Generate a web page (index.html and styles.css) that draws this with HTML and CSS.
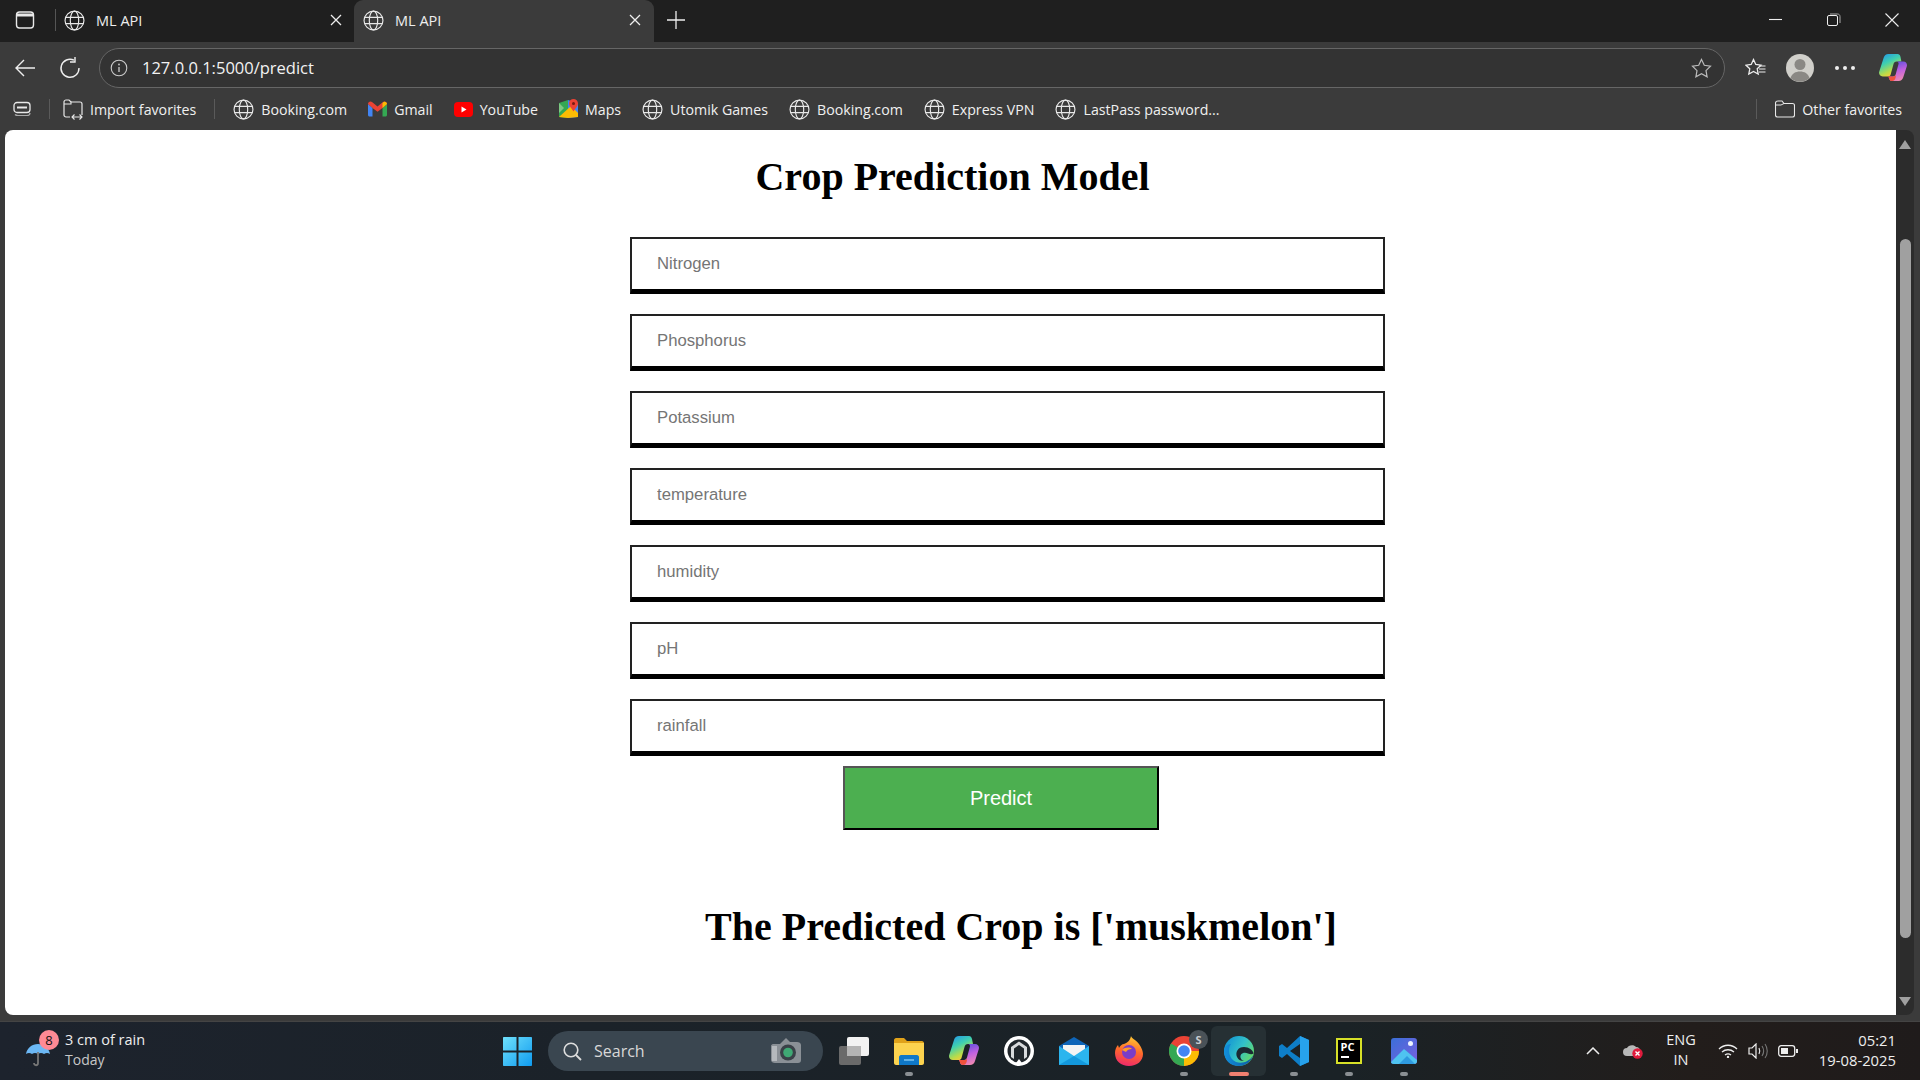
FILE: index.html
```html
<!DOCTYPE html>
<html>
<head>
    <title>ML API</title>
    <link rel="stylesheet" href="styles.css">
</head>
<body>
    <svg class="defs" width="0" height="0">
        <symbol id="globe" viewBox="0 0 20 20">
            <g fill="none" stroke="#e8e8e8" stroke-width="1.1">
                <circle cx="10" cy="10" r="9"/>
                <ellipse cx="10" cy="10" rx="4" ry="9"/>
                <path d="M1.6 7h16.8M1.6 13h16.8"/>
            </g>
        </symbol>
        <symbol id="copilot" viewBox="0 0 30 30">
            <defs>
                <linearGradient id="copA" x1="0" y1="0" x2="0.5" y2="1">
                    <stop offset="0" stop-color="#1f8ff0"/>
                    <stop offset="0.45" stop-color="#3fd0b0"/>
                    <stop offset="0.8" stop-color="#b8dc4a"/>
                    <stop offset="1" stop-color="#f8c93a"/>
                </linearGradient>
                <linearGradient id="copB" x1="0.3" y1="0" x2="0.6" y2="1">
                    <stop offset="0" stop-color="#5a50e0"/>
                    <stop offset="0.5" stop-color="#c060e0"/>
                    <stop offset="1" stop-color="#f08ab0"/>
                </linearGradient>
            </defs>
            <path d="M10 0h10c1.500 0 2.500 1 3 3l1 5h-5c-2 0-3 1-3.500 3l-3 11c-.5 1.500-1.500 2-3 2H4c-3 0-4.500-2.500-3.800-5L5 4c.7-2.500 2.500-4 5-4z" fill="url(#copA)"/>
            <path d="M19 8h7c3 0 4.500 2.500 3.800 5L26 25c-.7 2.500-2.500 4-5 4h-7c-1.500 0-3-1-3-3l-1-2h5c1.500 0 2.500-1 3-2.500l3-11C21 9 20.500 8 19 8z" fill="url(#copB)"/>
            <path d="M10 24h5.500c1 0 2-.5 2.500-1.500 0 0 .5 6.500-4 6.500-1.800 0-2.600-1-3-2.500z" fill="#f0523c"/>
        </symbol>
    </svg>

    <div class="tabstrip">
        <svg class="sidebar-btn" width="20" height="18" viewBox="0 0 20 18"><rect x="1.500" y="1" width="17" height="16" rx="3" fill="none" stroke="#e8e8e8" stroke-width="1.400"/><path d="M2 2.500h16v3H2z" fill="#e8e8e8"/></svg>
        <div class="tab-sep"></div>
        <div class="tab">
            <svg width="21" height="21"><use href="#globe"/></svg>
            <span class="tab-title">ML API</span>
            <svg class="tab-close" width="14" height="14" viewBox="0 0 14 14"><path d="M2 2l10 10M12 2L2 12" stroke="#eee" stroke-width="1.300"/></svg>
        </div>
        <div class="tab active">
            <svg width="21" height="21"><use href="#globe"/></svg>
            <span class="tab-title">ML API</span>
            <svg class="tab-close" width="14" height="14" viewBox="0 0 14 14"><path d="M2 2l10 10M12 2L2 12" stroke="#eee" stroke-width="1.300"/></svg>
        </div>
        <svg class="new-tab" width="18" height="18" viewBox="0 0 18 18"><path d="M9 0v18M0 9h18" stroke="#eee" stroke-width="1.300"/></svg>
        <div class="window-btns">
            <svg width="14" height="14" viewBox="0 0 14 14"><path d="M0 6.500h13" stroke="#eee" stroke-width="1.100"/></svg>
            <svg width="14" height="14" viewBox="0 0 14 14"><rect x="0.500" y="2.500" width="10" height="10" rx="1.500" fill="none" stroke="#eee"/><path d="M3 1h7.500C12 1 13 2 13 3.500V10" fill="none" stroke="#aaa"/></svg>
            <svg width="14" height="14" viewBox="0 0 14 14"><path d="M0.500 0.500l13 13M13.500 0.500l-13 13" stroke="#eee" stroke-width="1.100"/></svg>
        </div>
    </div>

    <div class="toolbar">
        <svg class="tool-back" width="22" height="20" viewBox="0 0 22 20"><path d="M21 10H2M10 2l-8 8 8 8" fill="none" stroke="#eee" stroke-width="1.400"/></svg>
        <svg class="tool-reload" width="22" height="22" viewBox="0 0 22 22"><path d="M15 3.200A9 9 0 1 0 20 11" fill="none" stroke="#eee" stroke-width="1.400"/><path d="M16 0v5h-5" fill="none" stroke="#eee" stroke-width="1.400"/></svg>
        <div class="address">
            <svg width="18" height="18" viewBox="0 0 18 18"><circle cx="9" cy="9" r="7.800" fill="none" stroke="#ccc" stroke-width="1.100"/><path d="M9 8v5" stroke="#ccc" stroke-width="1.300"/><circle cx="9" cy="5.500" r="0.900" fill="#ccc"/></svg>
            <span class="url">127.0.0.1:5000/predict</span>
            <svg class="addr-star" width="21" height="20" viewBox="0 0 21 20"><path d="M10.500 1.500l2.800 5.800 6.200.9-4.500 4.400 1.100 6.200-5.600-3-5.600 3 1.100-6.200L1.500 8.200l6.200-.9z" fill="none" stroke="#bbb" stroke-width="1.200"/></svg>
        </div>
        <svg class="fav-btn" width="21" height="20" viewBox="0 0 21 20"><path d="M8.500 1.500l2.300 5 5.200.7-3.800 3.600 1 5.200-4.700-2.600-4.700 2.600 1-5.200L1 7.200l5.200-.7z" fill="none" stroke="#eee" stroke-width="1.300"/><path d="M14 8h6.500M14 11h6.500M14 14h6.500" stroke="#eee" stroke-width="1.100"/></svg>
        <svg class="profile" width="28" height="28" viewBox="0 0 28 28"><circle cx="14" cy="14" r="14" fill="#d0cfca"/><circle cx="14" cy="10.500" r="5.500" fill="#8a8884"/><path d="M4.500 24c1.500-4.500 5-6.500 9.500-6.500s8 2 9.500 6.500a14 14 0 0 1-19 0z" fill="#8a8884"/></svg>
        <div class="dots"><i></i><i></i><i></i></div>
        <svg class="tool-copilot" width="28" height="28"><use href="#copilot"/></svg>
    </div>

    <div class="bookmarks">
        <svg class="bm-collections" width="20" height="16" viewBox="0 0 20 16"><rect x="1" y="1.500" width="16" height="10" rx="3" fill="none" stroke="#e8e8e8" stroke-width="1.300"/><path d="M4 5.500h10v2H4z" fill="#e8e8e8"/><path d="M2 13.500c1 1 2 1 3 1h9c1.500 0 3-1 3-2.500" fill="none" stroke="#aaa" stroke-width="1.200"/></svg>
        <div class="bm-sep"></div>
        <div class="bm bm-import">
            <svg width="21" height="21" viewBox="0 0 21 21"><path d="M7 18H3c-1 0-2-1-2-2V3c0-1 1-2 2-2h3l2 2h9c1 0 2 1 2 2v11" fill="none" stroke="#e8e8e8" stroke-width="1.200"/><path d="M1 5h7V2.500" fill="none" stroke="#e8e8e8" stroke-width="1.100"/><path d="M9 18h10M11.500 15.500L9 18l2.500 2.500M16.500 15.500L19 18l-2.500 2.500" fill="none" stroke="#e8e8e8" stroke-width="1.100"/></svg>
            <span>Import favorites</span>
        </div>
        <div class="bm-sep bm-sep2"></div>
        <div class="bm bm-first"><svg width="21" height="21"><use href="#globe"/></svg><span>Booking.com</span></div>
        <div class="bm">
            <svg width="19" height="16" viewBox="0 0 19 16"><path d="M0 3v11c0 .8.600 1.500 1.500 1.500H4.500V7z" fill="#4285f4"/><path d="M14.500 7v8.500h3c.9 0 1.500-.7 1.500-1.500V3z" fill="#34a853"/><path d="M0 3c0-2 2.500-3.500 4-2l5.500 4.500L15 1c1.500-1.500 4 0 4 2l-4.500 4-5 3.800L4.500 7z" fill="#ea4335"/><path d="M14.500 2v5L19 3c0-2-2.500-3.500-4.500-1z" fill="#fbbc04"/></svg>
            <span>Gmail</span>
        </div>
        <div class="bm">
            <svg width="19" height="15" viewBox="0 0 19 15"><rect width="19" height="15" rx="4" fill="#f00"/><path d="M7.500 4.500v6l5-3z" fill="#fff"/></svg>
            <span>YouTube</span>
        </div>
        <div class="bm">
            <svg width="19" height="20" viewBox="0 0 19 20"><path d="M0 4l9-3v18l-9-1z" fill="#34a853"/><path d="M9 1l10 3v14l-10 1z" fill="#4285f4"/><path d="M0 18L12 7l7 7v4l-10 1z" fill="#fbbc04"/><path d="M0 4l5 5-5 5z" fill="#7ec883"/><path d="M14.500 0a4.500 4.500 0 0 1 4.500 4.500c0 3-3 5-4.500 8-1.500-3-4.500-5-4.500-8A4.500 4.500 0 0 1 14.500 0z" fill="#ea4335"/><circle cx="14.500" cy="4.500" r="1.500" fill="#7a1a12"/></svg>
            <span>Maps</span>
        </div>
        <div class="bm"><svg width="21" height="21"><use href="#globe"/></svg><span>Utomik Games</span></div>
        <div class="bm"><svg width="21" height="21"><use href="#globe"/></svg><span>Booking.com</span></div>
        <div class="bm"><svg width="21" height="21"><use href="#globe"/></svg><span>Express VPN</span></div>
        <div class="bm"><svg width="21" height="21"><use href="#globe"/></svg><span>LastPass password...</span></div>
        <div class="bm-sep bm-sep3"></div>
        <div class="bm bm-other">
            <svg width="20" height="18" viewBox="0 0 20 18"><path d="M3 1h4l2 2.500h8.500c1 0 2 1 2 2V15c0 1-1 2-2 2H2.500c-1 0-2-1-2-2V3C.5 2 1.500 1 3 1z" fill="none" stroke="#e8e8e8" stroke-width="1.100"/><path d="M.5 5H6l3-1.500" fill="none" stroke="#e8e8e8" stroke-width="1"/></svg>
            <span>Other favorites</span>
        </div>
    </div>

    <div class="content">
        <div class="page">
            <h1 class="title">Crop Prediction Model</h1>
            <form class="crop-form">
                <input type="text" placeholder="Nitrogen">
                <input type="text" placeholder="Phosphorus">
                <input type="text" placeholder="Potassium">
                <input type="text" placeholder="temperature">
                <input type="text" placeholder="humidity">
                <input type="text" placeholder="pH">
                <input type="text" placeholder="rainfall">
                <button type="button" class="predict">Predict</button>
            </form>
            <h1 class="result">The Predicted Crop is ['muskmelon']</h1>
        </div>
        <div class="scrollbar">
            <div class="arrow-up"></div>
            <div class="thumb"></div>
            <div class="arrow-down"></div>
        </div>
    </div>

    <div class="taskbar">
        <div class="weather">
            <div class="umbrella">
                <svg width="24" height="23" viewBox="0 0 24 23"><path d="M0 10C1 4 6 0 12 0s11 4 12 10c-2-1.500-4-1.500-6 0-2-1.500-4-1.500-6 0-2-1.500-4-1.500-6 0-2-1.500-4-1.500-6 0z" fill="#6cb8f5"/><path d="M12 8v11c0 3-4 3-4 0" fill="none" stroke="#777" stroke-width="1.800"/></svg>
                <span class="badge">8</span>
            </div>
            <div class="weather-text">
                <span class="w1">3 cm of rain</span>
                <span class="w2">Today</span>
            </div>
        </div>
        <div class="apps">
            <svg class="start" width="29" height="29" viewBox="0 0 29 29">
                <defs><linearGradient id="win" x1="0" y1="0" x2="1" y2="1"><stop offset="0" stop-color="#6fe0fb"/><stop offset="1" stop-color="#0f9bf0"/></linearGradient></defs>
                <path d="M1 0h12.500v13.500H0V1c0-.6.400-1 1-1zM15.500 0H28c.6 0 1 .4 1 1v12.500H15.500zM0 15.500h13.500V29H1c-.6 0-1-.4-1-1zM15.500 15.500H29V28c0 .6-.4 1-1 1H15.500z" fill="url(#win)"/>
            </svg>
            <div class="search">
                <svg width="19" height="19" viewBox="0 0 19 19"><circle cx="8" cy="8" r="6.800" fill="none" stroke="#ddd" stroke-width="1.600"/><path d="M13 13l5 5" stroke="#ddd" stroke-width="1.800"/></svg>
                <span>Search</span>
                <svg class="search-cam" width="30" height="26" viewBox="0 0 30 26"><path d="M2 6h7l2-2 4-4 4 4h7c2 0 4 1 4 3v15c0 2-1 3-3 3H4c-2 0-4-1-4-3V8c0-1 1-2 2-2z" fill="#8a9096"/><rect x="1" y="8" width="5" height="15" fill="#b5b9bd"/><circle cx="17" cy="14.500" r="8" fill="#3a4148"/><circle cx="17" cy="14.500" r="4.800" fill="#3fa874"/></svg>
            </div>
            <div class="app app-task">
                <svg width="30" height="28" viewBox="0 0 30 28"><rect x="0" y="9" width="22" height="19" rx="2" fill="#6a6a6a"/><rect x="8" y="0" width="22" height="19" rx="2" fill="#f2f2f2"/><rect x="8" y="9" width="14" height="10" fill="#b4b4b4"/></svg>
            </div>
            <div class="app app-files">
                <svg width="30" height="27" viewBox="0 0 30 27"><path d="M0 2c0-1 1-2 2-2h8l3 3h15c1 0 2 1 2 2v3H0z" fill="#e0a21a"/><path d="M0 5h30v20c0 1-1 2-2 2H2c-1 0-2-1-2-2z" fill="#fcd34f"/><path d="M5 27v-8c0-1 1-2 2-2h16c1 0 2 1 2 2v8z" fill="#0f78c8"/><path d="M10 22h10" stroke="#7cc4f0" stroke-width="1.500"/></svg>
                <i class="pip"></i>
            </div>
            <div class="app app-cop"><svg width="30" height="30"><use href="#copilot"/></svg></div>
            <div class="app app-wp">
                <svg width="30" height="30" viewBox="0 0 30 30"><circle cx="15" cy="15" r="15" fill="#fff"/><circle cx="15" cy="15" r="11.500" fill="#20262b"/><path d="M7 21V11l8-5.500L23 11v10l-3 2V12.500l-5-3.500-5 3.500V23z" fill="#d8dadc"/><path d="M12 27l3-4 3 4z" fill="#fff"/></svg>
            </div>
            <div class="app app-mail">
                <svg width="30" height="28" viewBox="0 0 30 28"><path d="M15 0l15 9v3H0V9z" fill="#0f65b8"/><path d="M4 8h22v7l-11 5-11-5z" fill="#f4f4f4"/><path d="M0 9l15 10L30 9v19H0z" fill="#2bb5ee"/><path d="M0 28l15-9 15 9z" fill="#1398dc"/></svg>
            </div>
            <div class="app app-fox">
                <svg width="28" height="30" viewBox="0 0 28 30">
                    <defs><linearGradient id="fox" x1="0.6" y1="0" x2="0.4" y2="1"><stop offset="0" stop-color="#ffc933"/><stop offset="0.5" stop-color="#ff6a2b"/><stop offset="1" stop-color="#ee2a6a"/></linearGradient></defs>
                    <path d="M16 0c1 3 4 3 8 8 3 4 4 8 4 10 0 7-6 12-14 12S0 25 0 17c0-3 1-6 3-8l1 3c1-2 3-4 5-4 3-1 6-3 7-8z" fill="url(#fox)"/>
                    <circle cx="14" cy="16" r="7" fill="#7a3dc8"/>
                    <path d="M7 14c3-3 8-3 10-1-3 0-5 1-6 3z" fill="#ff9a2b"/>
                </svg>
            </div>
            <div class="app app-chrome">
                <svg width="30" height="30" viewBox="0 0 30 30"><circle cx="15" cy="15" r="15" fill="#ea4335"/><path d="M15 15L2 7.500A15 15 0 0 0 15 30l6.500-11z" fill="#34a853"/><path d="M15 15h15A15 15 0 0 1 15 30z" fill="#fbbc04"/><circle cx="15" cy="15" r="7.500" fill="#fff"/><circle cx="15" cy="15" r="5.800" fill="#4285f4"/></svg>
                <span class="chrome-s">S</span>
                <i class="pip"></i>
            </div>
            <div class="app app-edge">
                <svg width="30" height="30" viewBox="0 0 30 30">
                    <defs>
                        <linearGradient id="edge" x1="0" y1="0" x2="1" y2="0.600"><stop offset="0" stop-color="#0c8bd6"/><stop offset="0.600" stop-color="#33c2c9"/><stop offset="1" stop-color="#62d96b"/></linearGradient>
                        <linearGradient id="edgeB" x1="0" y1="0" x2="1" y2="0"><stop offset="0" stop-color="#1290dc"/><stop offset="1" stop-color="#0c59a4"/></linearGradient>
                    </defs>
                    <circle cx="15" cy="15" r="15" fill="url(#edge)"/>
                    <path d="M29.500 19c-3 7-8 11-14.500 11C6 30 0 24 0 15 0 11 3 8 7 8c-4 5-2 15 5 18 6 2 13 0 17.500-7z" fill="url(#edgeB)"/>
                    <path d="M29.500 17.500C29 14 25 11 20 11c-6 0-9 5-7 10 1.500 3 4 4 7 4-3-1-4.500-4-3-6.500 1.500-2 5-2 7-1 2 .8 4 1.200 5.500 0z" fill="#1b2a33"/>
                </svg>
                <i class="pip pip-on"></i>
            </div>
            <div class="app app-code">
                <svg width="30" height="30" viewBox="0 0 30 30"><path d="M21 0l9 4v22l-9 4L8 18l-5 4-3-2v-10l3-2 5 4z" fill="#0e7ec8"/><path d="M21 0l9 4v22l-9 4z" fill="#27a2ec"/><path d="M21 8L11 15l10 7z" fill="#1b2226"/></svg>
                <i class="pip"></i>
            </div>
            <div class="app app-pc">
                <div class="pc-logo"><span>PC</span><i></i></div>
                <i class="pip"></i>
            </div>
            <div class="app app-photos">
                <svg width="26" height="26" viewBox="0 0 26 26">
                    <defs><linearGradient id="ph" x1="0" y1="0" x2="1" y2="1"><stop offset="0" stop-color="#3a6fd8"/><stop offset="1" stop-color="#7a5fe0"/></linearGradient></defs>
                    <rect width="26" height="26" rx="3" fill="url(#ph)"/><circle cx="19.500" cy="5.500" r="2.500" fill="#eef4ff"/><path d="M0 24l13-13 13 11v1c0 2-1 3-3 3H3c-2 0-3-1-3-2z" fill="#4fc3f0"/><path d="M8 26l8-8 8 8z" fill="#2f9be0"/>
                </svg>
                <i class="pip"></i>
            </div>
        </div>
        <div class="tray">
            <svg class="tray-up" width="14" height="8" viewBox="0 0 14 8"><path d="M1 7l6-6 6 6" fill="none" stroke="#eee" stroke-width="1.500"/></svg>
            <div class="tray-cloud">
                <svg width="20" height="16" viewBox="0 0 20 16"><path d="M4 13a4 4 0 0 1 0-8c1-3 7-4 9-1 3 0 4 2 4 4v5z" fill="#b8b8b8"/><circle cx="14.500" cy="10.500" r="5.200" fill="#e01b3c"/><path d="M12.500 8.500l4 4M16.500 8.500l-4 4" stroke="#fff" stroke-width="1.400"/></svg>
            </div>
            <div class="lang"><span>ENG</span><span>IN</span></div>
            <svg class="tray-wifi" width="20" height="14" viewBox="0 0 20 14"><path d="M1 5c5-5 13-5 18 0M4 8c3.500-3 8.500-3 12 0M7 11c2-1.500 4-1.500 6 0" fill="none" stroke="#eee" stroke-width="1.300"/><circle cx="10" cy="13" r="1.200" fill="#eee"/></svg>
            <svg class="tray-sound" width="20" height="16" viewBox="0 0 20 16"><path d="M1 5h3l4-4v14l-4-4H1z" fill="none" stroke="#eee" stroke-width="1.200"/><path d="M11 5c1 2 1 4 0 6" fill="none" stroke="#eee" stroke-width="1.100"/><path d="M14 3c2 3 2 7 0 10M17 1c3 4 3 10 0 14" fill="none" stroke="#777" stroke-width="1.100"/></svg>
            <svg class="tray-batt" width="20" height="12" viewBox="0 0 20 12"><rect x="0.700" y="0.700" width="16" height="10.600" rx="2.500" fill="none" stroke="#eee" stroke-width="1.300"/><rect x="3" y="3" width="7" height="6" fill="#eee"/><rect x="18" y="4" width="2" height="4" fill="#eee"/></svg>
            <div class="clock"><span>05:21</span><span>19-08-2025</span></div>
        </div>
    </div>
</body>
</html>
```

FILE: styles.css
```css
html, body {
    margin: 0;
    padding: 0;
}

body {
    width: 1920px;
    height: 1080px;
    overflow: hidden;
    display: flex;
    flex-direction: column;
    background-color: #3b3b3b;
    font-family: "Open Sans", "Noto Sans", sans-serif;
    color: #eee;
}

.defs {
    display: block;
    height: 0;
}

/* browser tabs */
.tabstrip {
    height: 42px;
    box-sizing: border-box;
    flex: none;
    display: flex;
    align-items: center;
    background-color: #1f1f1f;
}

.sidebar-btn {
    margin-left: 15px;
    margin-top: -2px;
}

.tab-sep {
    width: 1px;
    height: 22px;
    margin-left: 20px;
    margin-top: -2px;
    background-color: #555;
}

.tab {
    height: 42px;
    box-sizing: border-box;
    display: flex;
    align-items: center;
    font-size: 14.5px;
    padding-bottom: 2px;
}

.tab:nth-of-type(2) {
    width: 298px;
    padding-left: 8px;
    padding-right: 11px;
}

.tab-title {
    margin-left: 11px;
    flex: 1;
}

.tab.active {
    width: 300px;
    padding-left: 9px;
    padding-right: 12px;
    background-color: #3b3b3b;
    border-radius: 9px 9px 0 0;
}

.new-tab {
    margin-left: 13px;
    margin-top: -2px;
}

.window-btns {
    margin-left: auto;
    margin-right: 21px;
    display: flex;
    gap: 44px;
    margin-top: -3px;
}

/* address row */
.toolbar {
    height: 46px;
    flex: none;
    display: flex;
    align-items: center;
    position: relative;
}

.tool-back {
    margin-left: 14px;
}

.tool-reload {
    margin-left: 23px;
}

.address {
    width: 1626px;
    height: 40px;
    box-sizing: border-box;
    margin-left: 18px;
    margin-top: 6px;
    padding: 0 12px 0 10px;
    display: flex;
    align-items: center;
    background-color: #333;
    border: 1px solid #666;
    border-radius: 20px;
}

.url {
    margin-left: 14px;
    margin-top: -2px;
    font-size: 16.5px;
    color: #f2f2f2;
}

.addr-star {
    margin-left: auto;
}

.tool-back,
.tool-reload,
.fav-btn,
.profile,
.dots,
.tool-copilot {
    margin-top: 6px;
}

.fav-btn {
    margin-left: 20px;
}

.profile {
    margin-left: 20px;
}

.dots {
    margin-left: 21px;
    display: flex;
    gap: 4px;
}

.dots i {
    width: 4px;
    height: 4px;
    border-radius: 50%;
    background-color: #eee;
}

.tool-copilot {
    margin-left: 24px;
}

/* favorites row */
.bookmarks {
    height: 42px;
    flex: none;
    display: flex;
    align-items: center;
    font-size: 14.2px;
    color: #f0f0f0;
}

.bm-collections {
    margin-left: 13px;
}

.bm-sep {
    width: 1px;
    height: 20px;
    margin-left: 16px;
    background-color: #5a5a5a;
}

.bm {
    display: flex;
    align-items: center;
    gap: 7px;
    margin-left: 21px;
}

.bm-import {
    margin-left: 13px;
    gap: 6px;
}

.bm-first {
    margin-left: 18px;
}

.bm-sep2 {
    margin-left: 18px;
}

.bm-sep3 {
    margin-left: auto;
}

.bm-other {
    margin-left: 18px;
    margin-right: 18px;
}

/* page area */
.content {
    height: 885px;
    flex: none;
    display: flex;
    margin: 0 6px 0 5px;
}

.page {
    flex: 1;
    background-color: #fff;
    color: #000;
    font-family: "Liberation Serif", serif;
    border-radius: 8px 0 0 8px;
    overflow: hidden;
}

.title,
.result {
    margin: 0;
    font-size: 40px;
    line-height: 46px;
    font-weight: bold;
    text-align: center;
}

.title {
    margin-top: 24px;
    margin-bottom: 37px;
    padding-left: 4px;
}

.crop-form {
    display: flex;
    flex-direction: column;
    align-items: flex-start;
    padding-left: 625px;
}

.crop-form input {
    width: 755px;
    height: 57px;
    box-sizing: border-box;
    margin-bottom: 20px;
    padding: 0 25px;
    border-style: solid;
    border-color: #222;
    border-width: 2px 2px 5px 2px;
    border-bottom-color: #000;
    background-color: #fff;
    font-family: "Liberation Sans", Arial, sans-serif;
    font-size: 16.7px;
    outline: none;
}

.crop-form input::placeholder {
    color: #757575;
}

.predict {
    width: 316px;
    height: 64px;
    margin: -10px 0 0 213px;
    background-color: #4caf50;
    color: #fff;
    border-style: solid;
    border-width: 2px;
    border-color: #555 #000 #000 #555;
    font-family: "Liberation Sans", Arial, sans-serif;
    font-size: 20px;
}

.result {
    margin-top: 74px;
    padding-left: 141px;
}

.scrollbar {
    width: 18px;
    flex: none;
    position: relative;
    background-color: #2c2c2c;
    border-radius: 0 8px 8px 0;
}

.thumb {
    position: absolute;
    left: 4px;
    top: 109px;
    width: 11px;
    height: 699px;
    border-radius: 6px;
    background-color: #a0a0a0;
}

.arrow-up,
.arrow-down {
    position: absolute;
    left: 3px;
    width: 0;
    height: 0;
    border-left: 6.5px solid transparent;
    border-right: 6.5px solid transparent;
}

.arrow-up {
    top: 10px;
    border-bottom: 9px solid #a0a0a0;
}

.arrow-down {
    top: 867px;
    border-top: 9px solid #a0a0a0;
}

/* windows taskbar */
.taskbar {
    height: 59px;
    flex: none;
    margin-top: 6px;
    display: flex;
    position: relative;
    background: linear-gradient(90deg, #1d232d 0%, #1b2229 30%, #1a2226 70%, #221d1b 88%, #1f1b1b 100%);
    border-top: 1px solid #444;
    box-sizing: border-box;
}

.weather {
    width: 503px;
    flex: none;
    display: flex;
    align-items: center;
}

.umbrella {
    width: 24px;
    margin-left: 26px;
    margin-top: 8px;
    position: relative;
}

.umbrella svg {
    display: block;
}

.badge {
    position: absolute;
    left: 13px;
    top: -14px;
    width: 20px;
    height: 20px;
    border-radius: 50%;
    background-color: #ff8a95;
    color: #111;
    font-size: 13px;
    line-height: 20px;
    text-align: center;
}

.weather-text {
    margin-left: 15px;
    margin-top: -2px;
    display: flex;
    flex-direction: column;
    font-size: 14.5px;
    line-height: 20px;
}

.w2 {
    color: #c8c8c8;
    font-size: 14px;
}

.apps {
    flex: none;
    display: flex;
    align-items: center;
}

.search {
    width: 275px;
    height: 40px;
    box-sizing: border-box;
    margin-left: 16px;
    padding: 0 22px 0 15px;
    display: flex;
    align-items: center;
    gap: 12px;
    background-color: #3a4650;
    border-radius: 20px;
    font-size: 16px;
    color: #d8d8d8;
}

.search-cam {
    margin-left: auto;
}

.app {
    width: 55px;
    height: 50px;
    display: flex;
    align-items: center;
    justify-content: center;
    position: relative;
}

.app-task {
    margin-left: 3px;
}

.pip {
    position: absolute;
    bottom: 0;
    left: 50%;
    width: 8px;
    height: 4px;
    margin-left: -4px;
    border-radius: 2px;
    background-color: #8a8f93;
}

.pip-on {
    width: 20px;
    margin-left: -10px;
    background-color: #f08070;
}

.app-edge {
    background-color: #263034;
    border-radius: 6px;
}

.chrome-s {
    position: absolute;
    left: 33px;
    top: 4px;
    width: 19px;
    height: 19px;
    border-radius: 50%;
    background-color: #4a5258;
    color: #c8ccd0;
    font-size: 11px;
    font-weight: bold;
    line-height: 19px;
    text-align: center;
}

.pc-logo {
    width: 26px;
    height: 26px;
    box-sizing: border-box;
    border: 2px solid #d7e028;
    background-color: #000;
    position: relative;
    color: #fff;
    font-size: 11px;
    font-weight: bold;
    line-height: 13px;
    padding-left: 3px;
}

.pc-logo span {
    display: block;
}

.pc-logo i {
    display: block;
    width: 8px;
    height: 1.500px;
    margin-top: 3px;
    background-color: #fff;
}

.tray {
    flex: 1;
    display: flex;
    align-items: center;
    padding-left: 155px;
    padding-right: 24px;
    font-size: 14.5px;
    line-height: 20px;
}

.tray-cloud {
    margin-left: 23px;
    height: 16px;
}

.lang {
    width: 36px;
    margin-left: 20px;
    margin-top: -2px;
    display: flex;
    flex-direction: column;
    align-items: center;
}

.tray-wifi {
    margin-left: 19px;
}

.tray-sound {
    margin-left: 10px;
}

.tray-batt {
    margin-left: 10px;
}

.clock {
    margin-left: auto;
    margin-top: -2px;
    display: flex;
    flex-direction: column;
    align-items: flex-end;
    font-size: 14.8px;
}
```
